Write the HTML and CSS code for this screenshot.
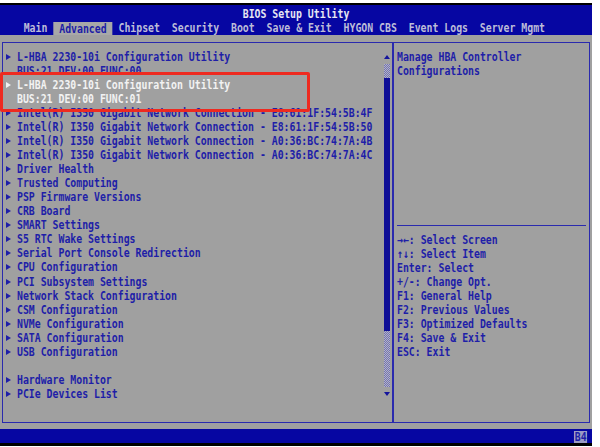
FILE: index.html
```html
<!DOCTYPE html>
<html lang="en">
<head>
  <meta charset="UTF-8">
  <title>BIOS Setup Utility</title>
  <link rel="stylesheet" href="styles.css">
</head>
<body>
  <div class="screen">
    <header class="top">
      <div class="title"><span class="txt">BIOS Setup Utility</span></div>
      <nav class="tabs">
        <span class="tab">Main</span>
        <span class="tab active">Advanced</span>
        <span class="tab">Chipset</span>
        <span class="tab">Security</span>
        <span class="tab">Boot</span>
        <span class="tab">Save &amp; Exit</span>
        <span class="tab">HYGON CBS</span>
        <span class="tab">Event Logs</span>
        <span class="tab">Server Mgmt</span>
      </nav>
    </header>

    <main class="body">
      <div class="frame">
        <section class="panel list">
          <div class="menu">
            <div class="item"><i class="arrow"></i><span class="txt">L-HBA 2230-10i Configuration Utility</span></div>
            <div class="item sub"><span class="txt">BUS:21 DEV:00 FUNC:00</span></div>
            <div class="item selected"><i class="arrow"></i><span class="txt">L-HBA 2230-10i Configuration Utility</span></div>
            <div class="item sub selected"><span class="txt">BUS:21 DEV:00 FUNC:01</span></div>
            <div class="item"><i class="arrow"></i><span class="txt">Intel(R) I350 Gigabit Network Connection - E8:61:1F:54:5B:4F</span></div>
            <div class="item"><i class="arrow"></i><span class="txt">Intel(R) I350 Gigabit Network Connection - E8:61:1F:54:5B:50</span></div>
            <div class="item"><i class="arrow"></i><span class="txt">Intel(R) I350 Gigabit Network Connection - A0:36:BC:74:7A:4B</span></div>
            <div class="item"><i class="arrow"></i><span class="txt">Intel(R) I350 Gigabit Network Connection - A0:36:BC:74:7A:4C</span></div>
            <div class="item"><i class="arrow"></i><span class="txt">Driver Health</span></div>
            <div class="item"><i class="arrow"></i><span class="txt">Trusted Computing</span></div>
            <div class="item"><i class="arrow"></i><span class="txt">PSP Firmware Versions</span></div>
            <div class="item"><i class="arrow"></i><span class="txt">CRB Board</span></div>
            <div class="item"><i class="arrow"></i><span class="txt">SMART Settings</span></div>
            <div class="item"><i class="arrow"></i><span class="txt">S5 RTC Wake Settings</span></div>
            <div class="item"><i class="arrow"></i><span class="txt">Serial Port Console Redirection</span></div>
            <div class="item"><i class="arrow"></i><span class="txt">CPU Configuration</span></div>
            <div class="item"><i class="arrow"></i><span class="txt">PCI Subsystem Settings</span></div>
            <div class="item"><i class="arrow"></i><span class="txt">Network Stack Configuration</span></div>
            <div class="item"><i class="arrow"></i><span class="txt">CSM Configuration</span></div>
            <div class="item"><i class="arrow"></i><span class="txt">NVMe Configuration</span></div>
            <div class="item"><i class="arrow"></i><span class="txt">SATA Configuration</span></div>
            <div class="item"><i class="arrow"></i><span class="txt">USB Configuration</span></div>
            <div class="item blank"></div>
            <div class="item"><i class="arrow"></i><span class="txt">Hardware Monitor</span></div>
            <div class="item"><i class="arrow"></i><span class="txt">PCIe Devices List</span></div>
          </div>
          <div class="scroll">
            <div class="up"></div>
            <div class="track"><div class="thumb"></div></div>
            <div class="down"></div>
          </div>
        </section>

        <aside class="panel help">
          <div class="desc">
            <div class="line"><span class="txt">Manage HBA Controller</span></div>
            <div class="line"><span class="txt">Configurations</span></div>
          </div>
          <div class="sep"></div>
          <div class="keys">
            <div class="line"><span class="txt">→←: Select Screen</span></div>
            <div class="line"><span class="txt">↑↓: Select Item</span></div>
            <div class="line"><span class="txt">Enter: Select</span></div>
            <div class="line"><span class="txt">+/-: Change Opt.</span></div>
            <div class="line"><span class="txt">F1: General Help</span></div>
            <div class="line"><span class="txt">F2: Previous Values</span></div>
            <div class="line"><span class="txt">F3: Optimized Defaults</span></div>
            <div class="line"><span class="txt">F4: Save &amp; Exit</span></div>
            <div class="line"><span class="txt">ESC: Exit</span></div>
          </div>
        </aside>
      </div>
    </main>

    <footer class="bottom"><span class="post">B4</span></footer>

    <div class="mark"></div>
  </div>
</body>
</html>
```

FILE: styles.css
```css
body{
  margin:0;
  background:#fff;
  font-family:"DejaVu Sans Mono", monospace;
  font-size:12px;
  font-weight:bold;
}
.screen{
  position:relative;
  width:592px;
  margin-top:3px;
  border-top:2px solid #000;
  border-bottom:3px solid #000;
  background:#a0a0a0;
}
/* bitmap font is narrow: squeeze each text run to 5.92px a column */
.txt{
  display:inline-block;
  white-space:pre;
  transform:scaleX(.82);
  transform-origin:0 50%;
}
.top{
  background:#0606a2;
  padding-top:2px;
  height:28px;
}
.title{
  height:14px;
  line-height:14px;
  text-align:center;
  color:#e6e6f2;
}
.title .txt{
  transform-origin:50% 50%;
}
.tabs{
  display:flex;
  height:14px;
  line-height:14px;
  padding-left:3ch;
  transform:scaleX(.82);
  transform-origin:0 50%;
  color:#bcbcd8;
  white-space:pre;
}
.tab{
  padding:0 1ch;
}
.tab.active{
  background:#a8a8a8;
  color:#1c1ca6;
  margin-top:1px;
}
.body{
  padding:7px 2px 6px 2px;
}
.frame{
  display:flex;
  height:381px;
}
.panel{
  box-sizing:border-box;
  border:1px solid #2a2aae;
  padding-top:7px;
  color:#1e1ea8;
  line-height:14.04px;
}
.list{
  width:391px;
  display:flex;
}
.menu{
  flex:1;
  min-width:0;
}
.item{
  display:flex;
  align-items:center;
  height:14.04px;
  padding-left:3px;
}
.item.sub{
  padding-left:14.2px;
}
.arrow{
  width:0;
  height:0;
  border-left:5px solid #1e1ea8;
  border-top:3px solid transparent;
  border-bottom:3px solid transparent;
  margin-right:6.2px;
}
.item.selected{
  color:#f2f2f2;
}
.item.selected .arrow{
  border-left-color:#f2f2f2;
}
.scroll{
  width:6px;
  margin-right:2px;
  display:flex;
  flex-direction:column;
}
.up, .down{
  height:14.04px;
  display:flex;
  align-items:center;
  justify-content:center;
}
.up:before{
  content:'';
  border-bottom:4px solid #14149c;
  border-left:3px solid transparent;
  border-right:3px solid transparent;
}
.down:before{
  content:'';
  border-top:4px solid #14149c;
  border-left:3px solid transparent;
  border-right:3px solid transparent;
}
.track{
  height:322.9px;
  background:repeating-conic-gradient(#7272b4 0 25%, #b4b4c4 0 50%) 0 0/2px 2px;
}
.thumb{
  margin-top:14px;
  height:253px;
  background:#0e0e96;
}
.help{
  width:197px;
  padding-left:2.6px;
}
.desc{
  height:168.5px;
}
.sep{
  height:14.04px;
  margin-right:3px;
  background:linear-gradient(#2a2aae, #2a2aae) 0 6px/100% 1px no-repeat;
}
.line{
  height:14.04px;
}
.bottom{
  display:flex;
  justify-content:flex-end;
  align-items:flex-end;
  height:14px;
  padding-right:5px;
  background:#0606a2;
}
.post{
  display:inline-block;
  height:12px;
  line-height:12px;
  padding:0 1px;
  background:#9c9cc4;
  color:#1e1ea8;
  transform:scaleX(.82);
  transform-origin:100% 50%;
}
.mark{
  position:absolute;
  left:0;
  top:67px;
  width:310px;
  height:40px;
  box-sizing:border-box;
  border:3px solid #ee2a20;
  border-radius:2px;
}
```
